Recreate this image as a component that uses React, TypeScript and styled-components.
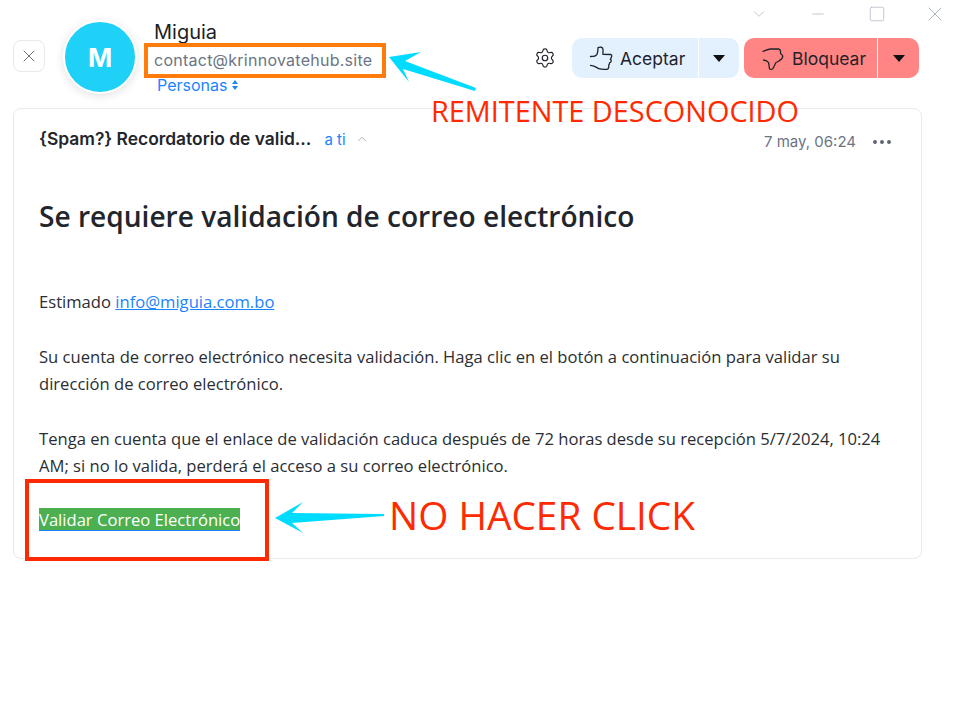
import React from 'react'
import styled, { createGlobalStyle } from 'styled-components'
import { Settings, X, Minus, Square, ChevronDown, ChevronUp, MoreHorizontal } from 'lucide-react'

const GlobalStyle = createGlobalStyle`
  html, body {
    margin: 0;
    padding: 0;
    background: #fff;
  }
  body {
    font-family: Inter, "Liberation Sans", sans-serif;
  }
`

const ThumbUp = () => (
  <svg width="30" height="26" viewBox="0 0 30 26" fill="none" stroke="#1f2329" strokeWidth="1.3" strokeLinejoin="round" strokeLinecap="round">
    <path d="M2.5 11.5C5 11.5 8 11 9 9.3C9.8 7.5 10 5 10 2.7C12 1.8 15 1.8 15 4.5C15 6.5 14.8 8 15 9.3L23 9.5C24.2 10 24 11.5 22.3 14.3C23.8 15 23.6 17 21.5 17.8C21.6 19 21.4 19.6 20.7 20C21 22.5 20.8 24 19 24.3C15 24.5 12.5 24.3 10.7 23.7C9 22.8 7 20.6 2.5 20.3" />
  </svg>
)

const ThumbDown = () => (
  <svg width="30" height="26" viewBox="0 0 30 26" fill="none" stroke="#1f2329" strokeWidth="1.3" strokeLinejoin="round" strokeLinecap="round">
    <path d="M3 6.5C5.5 5.5 8 4 10.5 4H18.5C20 4 20.8 5.5 20.5 8.5C22 9.5 23.2 11 22.5 12.5C21.5 15 19 15.5 19 16C18 16.8 16.8 17 16 17.5C14.5 20 14 22.5 12.5 24C10.8 24.8 9.6 24.4 9.5 23.5C9 21.5 9 19.5 8.5 17.5C7.5 16 5.5 15.2 3.5 15" />
  </svg>
)

const Caret = () => (
  <svg width="12" height="7" viewBox="0 0 12 7">
    <path d="M0 0H12L6 7Z" fill="#111" />
  </svg>
)

const SortGlyph = () => (
  <svg width="6" height="10" viewBox="0 0 6 10">
    <path d="M3 0L6 4H0Z M3 10L0 6H6Z" fill="#1a84ff" />
  </svg>
)

export default function App() {
  return (
    <Page>
      <GlobalStyle />
      <WindowControls>
        <ChevronDown size={18} strokeWidth={1} />
        <Minus size={18} strokeWidth={1} />
        <Square size={18} strokeWidth={1} />
        <WindowClose size={24} strokeWidth={1} />
      </WindowControls>

      <Header>
        <CloseButton>
          <X size={20} strokeWidth={1.1} />
        </CloseButton>
        <Avatar>M</Avatar>
        <Sender>
          <SenderName>Miguia</SenderName>
          <SenderEmail>contact@krinnovatehub.site</SenderEmail>
          <Recipients>
            Personas <SortGlyph />
          </Recipients>
        </Sender>
        <Actions>
          <GearButton>
            <Settings size={22} strokeWidth={1.3} />
          </GearButton>
          <SplitButton $tone="accept">
            <MainPart $width={127}>
              <ThumbUp />
              Aceptar
            </MainPart>
            <CaretPart $width={40}>
              <Caret />
            </CaretPart>
          </SplitButton>
          <SplitButton $tone="block">
            <MainPart $width={134}>
              <ThumbDown />
              Bloquear
            </MainPart>
            <CaretPart $width={41}>
              <Caret />
            </CaretPart>
          </SplitButton>
        </Actions>
      </Header>

      <Card>
        <CardHeader>
          <Subject>{'{Spam?} Recordatorio de valid...'}</Subject>
          <ToMe>a ti</ToMe>
          <ChevronUp size={14} strokeWidth={1.4} color="#9aa3af" />
          <DateLabel>7 may, 06:24</DateLabel>
          <MoreDots size={24} strokeWidth={1.9} color="#5b6472" />
        </CardHeader>
        <Body>
          <Title>Se requiere validación de correo electrónico</Title>
          <Paragraph>
            Estimado <MailLink>info@miguia.com.bo</MailLink>
          </Paragraph>
          <Paragraph>
            Su cuenta de correo electrónico necesita validación. Haga clic en el botón a continuación para validar su dirección de correo electrónico.
          </Paragraph>
          <Paragraph>
            Tenga en cuenta que el enlace de validación caduca después de 72 horas desde su recepción 5/7/2024, 10:24 AM; si no lo valida, perderá el acceso a su correo electrónico.
          </Paragraph>
          <ValidateLink>Validar Correo Electrónico</ValidateLink>
        </Body>
      </Card>

      <EmailFrame />
      <LinkFrame />
      <Arrows width="956" height="707" viewBox="0 0 956 707">
        <polygon points="389,57 421,52 405,61 476,88 475,91 403,69 409,82" fill="#00dcff" />
        <polygon points="275,518 303,502 292,513 384,514 384,516 292,523 303,533" fill="#00dcff" />
      </Arrows>
      <SenderNote>REMITENTE DESCONOCIDO</SenderNote>
      <ClickNote>NO HACER CLICK</ClickNote>
    </Page>
  )
}

const Page = styled.div`
  position: relative;
  width: 956px;
  height: 707px;
  overflow: hidden;
  background: #fff;
`

const WindowControls = styled.div`
  position: absolute;
  top: 2px;
  right: 9px;
  display: flex;
  align-items: center;
  gap: 41px;
  color: #aeb6c4;
`

const WindowClose = styled(X)`
  margin-left: -4px;
`

const Header = styled.header`
  display: flex;
  align-items: flex-start;
  height: 108px;
  padding: 20px 37px 0 13px;
  box-sizing: border-box;
`

const CloseButton = styled.div`
  width: 32px;
  height: 32px;
  margin-top: 20px;
  border: 1px solid #e8eaee;
  border-radius: 8px;
  box-sizing: border-box;
  display: flex;
  align-items: center;
  justify-content: center;
  color: #5b6472;
`

const Avatar = styled.div`
  width: 74px;
  height: 74px;
  margin-left: 18px;
  border-radius: 50%;
  border: 2px solid #fff;
  box-sizing: border-box;
  background: #1fd0f7;
  box-shadow: 0 2px 10px rgba(0, 0, 0, 0.12);
  color: #fff;
  font-size: 26px;
  font-weight: 700;
  display: flex;
  align-items: center;
  justify-content: center;
  flex-shrink: 0;
`

const Sender = styled.div`
  margin-left: 17px;
  display: flex;
  flex-direction: column;
  align-items: flex-start;
`

const SenderName = styled.div`
  font-size: 20px;
  line-height: 24px;
  color: #1b1f24;
`

const SenderEmail = styled.div`
  margin-top: 4px;
  font-size: 16px;
  letter-spacing: 0.25px;
  line-height: 24px;
  color: #6b7584;
`

const Recipients = styled.div`
  margin: 1px 0 0 3px;
  display: flex;
  align-items: center;
  gap: 5px;
  font-size: 16px;
  line-height: 24px;
  color: #1a84ff;
`

const Actions = styled.div`
  margin-left: auto;
  margin-top: 18px;
  display: flex;
  align-items: center;
`

const GearButton = styled.div`
  display: flex;
  margin-right: 16px;
  color: #1f2329;
`

const SplitButton = styled.div<{ $tone: 'accept' | 'block' }>`
  display: flex;
  height: 40px;
  margin-right: 5px;
  border-radius: 10px;
  overflow: hidden;
  font-size: 17.5px;
  color: #1f2329;
  background: ${(p) => (p.$tone === 'accept' ? '#e3f1ff' : '#ff8585')};
  &:last-child {
    margin-right: 0;
  }
`

const MainPart = styled.div<{ $width: number }>`
  width: ${(p) => p.$width}px;
  padding-left: 16px;
  box-sizing: border-box;
  display: flex;
  align-items: center;
  gap: 2px;
  border-right: 1px solid #fff;
`

const CaretPart = styled.div<{ $width: number }>`
  width: ${(p) => p.$width}px;
  display: flex;
  align-items: center;
  justify-content: center;
`

const Card = styled.section`
  width: 909px;
  height: 451px;
  margin-left: 13px;
  border: 1px solid #e8eaee;
  border-radius: 8px;
  box-sizing: border-box;
`

const CardHeader = styled.div`
  display: flex;
  align-items: center;
  height: 60px;
  padding: 0 27px 0 25px;
`

const Subject = styled.div`
  margin-bottom: 2px;
  font-size: 17.4px;
  font-weight: 600;
  color: #22262c;
`

const ToMe = styled.div`
  margin: 0 9px 0 13px;
  font-size: 15px;
  color: #1a84ff;
`

const DateLabel = styled.div`
  margin: 4px 14px 0 auto;
  font-size: 15px;
  color: #6b7584;
`

const MoreDots = styled(MoreHorizontal)`
  margin-top: 6px;
`

const Body = styled.div`
  padding: 0 25px;
  font-family: "Open Sans", "Noto Sans", sans-serif;
  color: #2a2e33;
`

const Title = styled.h1`
  margin: 28px 0 53px;
  font-size: 28.1px;
  line-height: 38px;
  font-weight: 600;
  color: #22262c;
`

const Paragraph = styled.p`
  margin: 0 0 27px;
  font-size: 16.6px;
  line-height: 27.5px;
`

const MailLink = styled.span`
  color: #1a84ff;
  text-decoration: underline;
`

const ValidateLink = styled.span`
  display: inline-block;
  height: 23px;
  margin-top: 1px;
  line-height: 23px;
  font-size: 16.6px;
  color: #fff;
  background: #4caf50;
  border-bottom: 1px solid #1a84ff;
  box-sizing: border-box;
`

const EmailFrame = styled.div`
  position: absolute;
  left: 144px;
  top: 43px;
  width: 242px;
  height: 35px;
  border: 4px solid #ff7b0a;
  box-sizing: border-box;
`

const LinkFrame = styled.div`
  position: absolute;
  left: 25px;
  top: 479px;
  width: 244px;
  height: 82px;
  border: 4px solid #ff2a00;
  box-sizing: border-box;
`

const Arrows = styled.svg`
  position: absolute;
  left: 0;
  top: 0;
  pointer-events: none;
`

const SenderNote = styled.div`
  position: absolute;
  left: 431px;
  top: 91px;
  font-family: "Open Sans", "Noto Sans", sans-serif;
  font-size: 28.85px;
  line-height: 40px;
  color: #ff2a00;
  white-space: nowrap;
`

const ClickNote = styled.div`
  position: absolute;
  left: 389px;
  top: 488px;
  font-family: "Open Sans", "Noto Sans", sans-serif;
  font-size: 38.75px;
  line-height: 54px;
  color: #ff2a00;
  white-space: nowrap;
`
